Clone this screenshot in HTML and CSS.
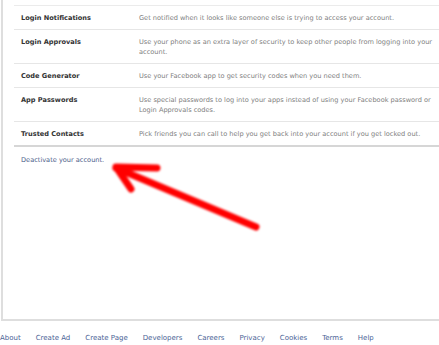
FILE: index.html
```html
<!DOCTYPE html>
<html>
<head>
<meta charset="utf-8">
<link rel="stylesheet" href="styles.css">
</head>
<body>
<div class="page">
  <div class="panel">
    <div class="settings">
      <div class="row">
        <div class="label">Login Notifications</div>
        <div class="desc">Get notified when it looks like someone else is trying to access your account.</div>
      </div>
      <div class="row">
        <div class="label">Login Approvals</div>
        <div class="desc">Use your phone as an extra layer of security to keep other people from logging into your account.</div>
      </div>
      <div class="row">
        <div class="label">Code Generator</div>
        <div class="desc">Use your Facebook app to get security codes when you need them.</div>
      </div>
      <div class="row">
        <div class="label">App Passwords</div>
        <div class="desc">Use special passwords to log into your apps instead of using your Facebook password or Login Approvals codes.</div>
      </div>
      <div class="row last">
        <div class="label">Trusted Contacts</div>
        <div class="desc">Pick friends you can call to help you get back into your account if you get locked out.</div>
      </div>
    </div>
    <a class="deactivate" href="#">Deactivate your account.</a>
  </div>
  <div class="footer">
    <a href="#">About</a>
    <a href="#">Create Ad</a>
    <a href="#">Create Page</a>
    <a href="#">Developers</a>
    <a href="#">Careers</a>
    <a href="#">Privacy</a>
    <a href="#">Cookies</a>
    <a href="#">Terms</a>
    <a href="#">Help</a>
  </div>
  <svg class="arrow" width="439" height="345" viewBox="0 0 439 345">
    <defs>
      <filter id="soft" x="-10%" y="-10%" width="120%" height="120%">
        <feGaussianBlur stdDeviation="0.8"/>
      </filter>
    </defs>
    <g stroke="#ff0000" stroke-width="7" stroke-linecap="round" stroke-linejoin="round" fill="none" filter="url(#soft)">
      <path d="M256 227 L116 168"/>
      <path d="M157 168 L116 167 L131 189"/>
    </g>
  </svg>
</div>
</body>
</html>
```
FILE: styles.css
```css
html, body {
  margin: 0;
  padding: 0;
  background: #fff;
}
.page {
  position: relative;
  width: 439px;
  height: 345px;
  overflow: hidden;
  font-family: "DejaVu Sans", Tahoma, sans-serif;
  font-size: 6.6px;
}
.panel {
  margin-left: 1px;
  width: 460px;
  height: 321px;
  box-sizing: border-box;
  border-left: 2px solid #dedede;
  border-bottom: 2px solid #dedede;
  padding: 5px 0 0 11px;
}
.settings {
  border-top: 1px solid #ebebeb;
}
.row {
  display: grid;
  grid-template-columns: 118px 300px;
  padding: 7px 0 6px 7px;
  line-height: 10px;
  border-bottom: 1px solid #e6e6e6;
}
.row.last {
  border-bottom: 2px solid #d6d6d6;
}
.label {
  font-weight: bold;
  color: #333;
}
.desc {
  color: #808080;
}
.deactivate {
  display: inline-block;
  margin: 8px 0 0 7px;
  line-height: 10px;
  color: #4b5e8a;
  text-decoration: none;
}
.footer {
  display: flex;
  gap: 15px;
  padding-top: 12px;
  font-size: 7px;
  line-height: 10px;
}
.footer a {
  color: #4b6396;
  text-decoration: none;
}
.arrow {
  position: absolute;
  left: 0;
  top: 0;
}
```
